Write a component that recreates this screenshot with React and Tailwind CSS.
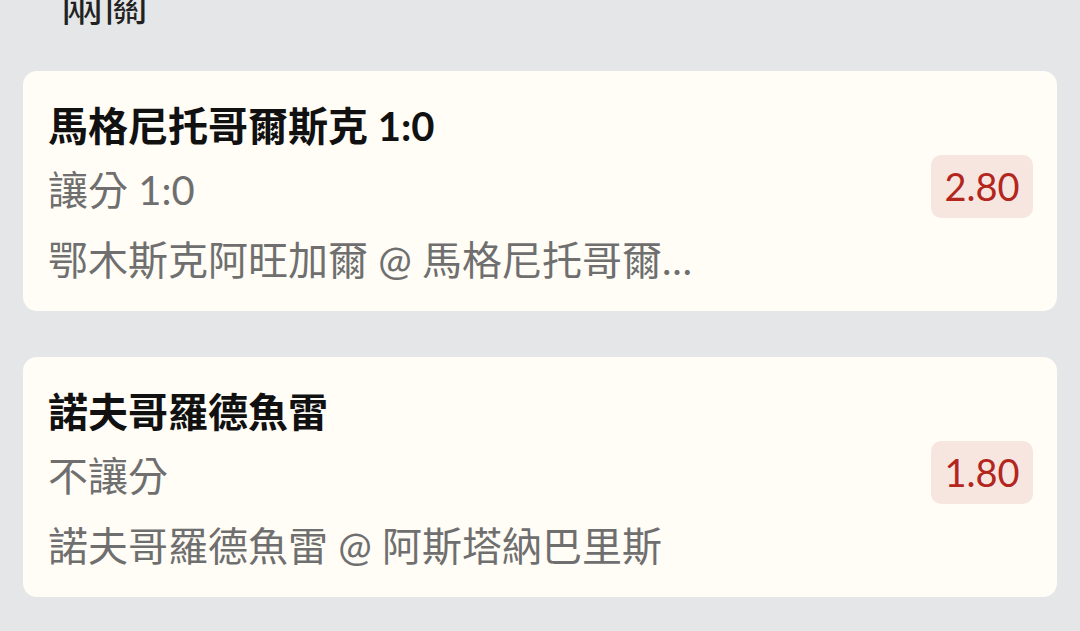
import React from "react";

const bets = [
    {
        title: "馬格尼托哥爾斯克 1:0",
        market: "讓分 1:0",
        match: "鄂木斯克阿旺加爾 @ 馬格尼托哥爾斯克",
        odds: "2.80",
    },
    {
        title: "諾夫哥羅德魚雷",
        market: "不讓分",
        match: "諾夫哥羅德魚雷 @ 阿斯塔納巴里斯",
        odds: "1.80",
    },
];

function BetCard({ bet }) {
    return (
        <div className="bg-[#fffdf6] rounded-[14px] h-[240px] pl-[25px] pr-[24px] flex items-center justify-between">
            <div className="flex flex-col min-w-0 pt-[4px]">
                <div className="text-[40px] leading-[56px] font-bold text-[#111]">{bet.title}</div>
                <div className="text-[40px] leading-[56px] text-[#6f6f6f] mt-[8px]">{bet.market}</div>
                <div className="text-[40px] leading-[56px] text-[#6f6f6f] mt-[14px] max-w-[645px] truncate">{bet.match}</div>
            </div>
            <div className="bg-[#f7e6e0] text-[#b3261e] rounded-[10px] w-[102px] h-[63px] flex items-center justify-center text-[38px] mb-[9px]">
                {bet.odds}
            </div>
        </div>
    );
}

export default function App() {
    return (
        <div
            className="w-[1080px] h-[631px] overflow-hidden bg-[#e5e6e8]"
            style={{ fontFamily: '"Lato", "Noto Sans CJK TC", sans-serif' }}
        >
            <div className="mt-[-24px] pl-[60px] text-[44px] leading-[56px] text-[#222]">兩關</div>
            <div className="flex flex-col gap-[46px] px-[23px] mt-[39px]">
                {bets.map((bet) => (
                    <BetCard key={bet.title} bet={bet} />
                ))}
            </div>
        </div>
    );
}
